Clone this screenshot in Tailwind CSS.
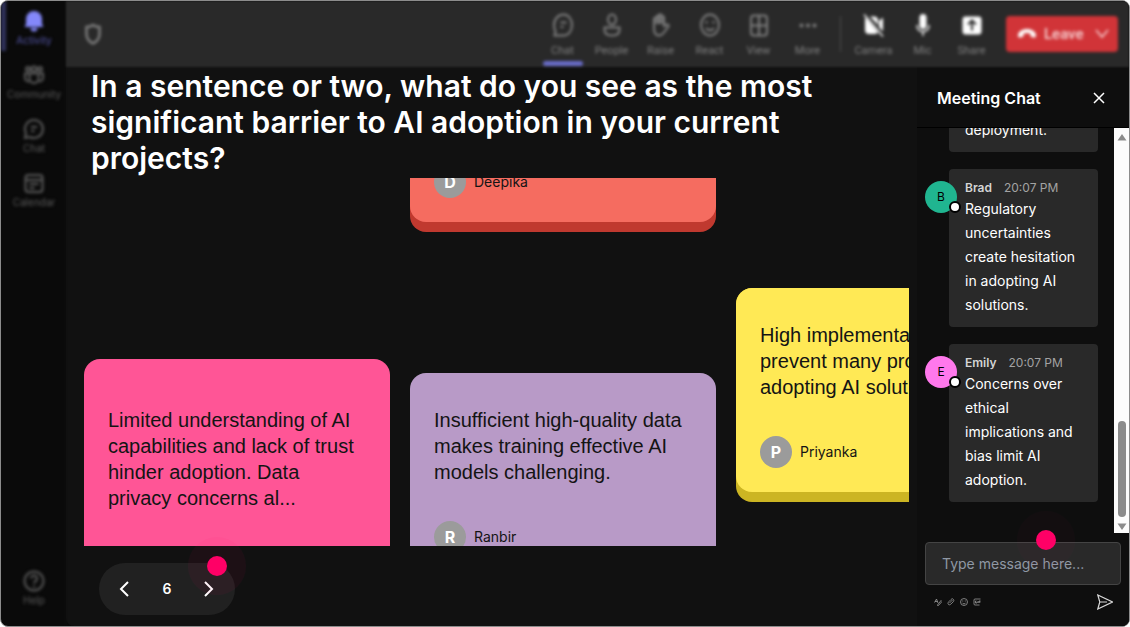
<!DOCTYPE html>
<html lang="en">
<head>
  <meta charset="UTF-8" />
  <meta name="viewport" content="width=device-width, initial-scale=1.0" />
  <title>Meeting</title>
  <script src="https://cdn.jsdelivr.net/npm/@tailwindcss/browser@4"></script>
</head>
<body class="bg-white font-['Inter',sans-serif]">
  <div class="flex h-screen overflow-hidden rounded-lg border border-[#8c8c8c] bg-[#0a0a0a] text-white">

    <!-- Sidebar -->
    <nav class="flex w-[65px] shrink-0 flex-col items-stretch border-r border-[#101010] pb-5 text-[10px] leading-3 text-[#5c5c5c] blur-[1px]">
      <a href="#" class="flex h-[50px] flex-col items-center gap-px border-l-5 border-[#30325c] pt-2 pr-[3px] text-[#5456a8] blur-[1px]">
        <svg class="size-6 shrink-0 text-[#8488fa]" viewBox="0 0 24 24" fill="currentColor"><path d="M12 2a8 8 0 0 0-8 8v5l-1.500 3h19L20 15v-5a8 8 0 0 0-8-8zM8.500 19h7a3.500 3.500 0 0 1-7 0z"/></svg>
        Activity
      </a>
      <a href="#" class="flex h-[54px] flex-col items-center gap-px pt-3 pl-0.5 blur-[1px]">
        <svg class="size-6 shrink-0" viewBox="0 0 24 24" fill="none" stroke="currentColor" stroke-width="2"><circle cx="6" cy="6" r="2"/><circle cx="12" cy="6" r="2.500"/><circle cx="18" cy="6" r="2"/><path d="M7.500 10.500h9v5a4.500 4.500 0 0 1-9 0zM7 10.500H3V15a3.500 3.500 0 0 0 4 3.400M17 10.500h4V15a3.500 3.500 0 0 1-4 3.400"/></svg>
        Community
      </a>
      <a href="#" class="flex h-[54px] flex-col items-center gap-px pt-3 pl-0.5 blur-[1px]">
        <svg class="size-6 shrink-0" viewBox="0 0 24 24" fill="none" stroke="currentColor" stroke-width="2"><path d="M12 3a9 9 0 1 1-4.200 17L3 21l1-4.800A9 9 0 0 1 12 3z"/><path d="M9 10h6M9 14h3.500"/></svg>
        Chat
      </a>
      <a href="#" class="flex h-[54px] flex-col items-center gap-px pt-3 pl-0.5 blur-[1px]">
        <svg class="size-6 shrink-0" viewBox="0 0 24 24" fill="none" stroke="currentColor" stroke-width="2"><rect x="3.500" y="4" width="17" height="17" rx="3"/><path d="M3.500 9h17M7.500 13h9M7.500 17h5"/></svg>
        Calendar
      </a>
      <a href="#" class="mt-auto flex flex-col items-center gap-px pl-0.5 blur-[1px]">
        <svg class="size-6 shrink-0" viewBox="0 0 24 24" fill="none" stroke="currentColor" stroke-width="2"><circle cx="12" cy="12" r="9.500"/><path d="M9 9.500a3 3 0 1 1 4.500 2.600c-1 .6-1.500 1.200-1.500 2.400M12 16.500v2"/></svg>
        Help
      </a>
    </nav>

    <div class="flex min-w-0 flex-1 flex-col rounded-bl-lg bg-[#111111]">

      <!-- Meeting toolbar -->
      <header class="flex h-[66px] shrink-0 items-center bg-[#292929] pr-[11px] pl-[15px] font-[Roboto,sans-serif] text-[11px] leading-3 text-[#808080] blur-[1px]">
        <div class="flex flex-1 items-center blur-[1px]">
          <svg class="size-6" viewBox="0 0 24 24" fill="none" stroke="currentColor" stroke-width="2.500"><path d="M12 3c2 1.500 4 2 6.500 2v7c0 4.500-2.500 7.500-6.500 9.500-4-2-6.500-5-6.500-9.500V5c2.500 0 4.500-.5 6.500-2z"/></svg>
        </div>
        <div class="flex h-full blur-[1px]">
          <button class="flex w-[49px] flex-col items-center gap-2 pt-3">
            <svg class="h-6 w-6 shrink-0" viewBox="0 0 24 24" fill="none" stroke="currentColor" stroke-width="2"><path d="M12.500 1.500c5 0 8.500 4.500 8.500 10.500s-3.500 10.500-8.500 10.500H3.500l1-4C3 16 3 14 3 12c0-6 4.500-10.500 9.500-10.500z"/><path d="M9.500 9.500h6M9.500 14h3"/></svg>
            Chat
            <span class="-mt-1 h-[5px] w-10 shrink-0 rounded-sm bg-[#6a6dca]"></span>
          </button>
          <button class="flex w-[49px] flex-col items-center gap-2 pt-3">
            <svg class="h-6 w-6 shrink-0" viewBox="0 0 24 24" fill="none" stroke="currentColor" stroke-width="2"><ellipse cx="12" cy="6.500" rx="4" ry="5"/><path d="M4.500 14.500h15v2c0 4-3 6-7.500 6s-7.500-2-7.500-6z"/></svg>
            People
          </button>
          <button class="flex w-[49px] flex-col items-center gap-2 pt-3">
            <svg class="h-6 w-6 shrink-0" viewBox="0 0 24 24" fill="none" stroke="currentColor" stroke-width="2"><path d="M5 15V6a1.200 1.200 0 0 1 2.500 0v5V4a1.200 1.200 0 0 1 2.500 0v7V2.500a1.200 1.200 0 0 1 2.500 0V11V4.500a1.200 1.200 0 0 1 2.500 0V13l3-1.500c1.500 0 2 1 1.500 2l-5 6.500c-1.500 2-3 2.500-4.500 2.500-3.500 0-5-3-5-7.500z"/></svg>
            Raise
          </button>
          <button class="flex w-[49px] flex-col items-center gap-2 pt-3">
            <svg class="h-6 w-6 shrink-0" viewBox="0 0 24 24" fill="none" stroke="currentColor" stroke-width="2"><ellipse cx="12" cy="12" rx="9" ry="10.500"/><path d="M8 15c2 3 6 3 8 0M8.500 8v2.500M15.500 8v2.500"/></svg>
            React
          </button>
          <button class="flex w-[49px] flex-col items-center gap-2 pt-3">
            <svg class="h-6 w-6 shrink-0" viewBox="0 0 24 24" fill="none" stroke="currentColor" stroke-width="2"><rect x="4" y="2.500" width="16" height="20" rx="3"/><path d="M12 2.500v20M4 12.500h16"/></svg>
            View
          </button>
          <button class="flex w-[49px] flex-col items-center gap-2 pt-3">
            <svg class="h-6 w-6 shrink-0" viewBox="0 0 24 24" fill="currentColor"><circle cx="5.500" cy="12.500" r="2"/><circle cx="12" cy="12.500" r="2"/><circle cx="18.500" cy="12.500" r="2"/></svg>
            More
          </button>
          <span class="mx-2 h-9 w-px self-center bg-[#505050]"></span>
          <button class="flex w-[49px] flex-col items-center gap-2 pt-3">
            <svg class="h-6 w-6 shrink-0 text-white" viewBox="0 0 24 24" fill="currentColor"><path d="M3 6v11a4 4 0 0 0 4 4h6a4 4 0 0 0 3-1.500L3.500 4.500zM8 3.500 16 12V7.500a4 4 0 0 0-4-4zM17 8l4-3.500v14L17 14z"/><path d="m2 1.500 19 22" stroke="currentColor" stroke-width="1.500"/></svg>
            Camera
          </button>
          <button class="flex w-[49px] flex-col items-center gap-2 pt-3">
            <svg class="h-6 w-6 shrink-0 text-white" viewBox="0 0 24 24" fill="currentColor"><rect x="8.500" y="1" width="7" height="15" rx="3.500"/><path d="M6 12c0 4 2 6.500 6 6.500s6-2.500 6-6.500M12 18.500V23" fill="none" stroke="currentColor" stroke-width="1.500"/></svg>
            Mic
          </button>
          <button class="flex w-[49px] flex-col items-center gap-2 pt-3">
            <svg class="h-6 w-6 shrink-0 text-white" viewBox="0 0 24 24"><rect x="2.500" y="3.500" width="19" height="18" rx="3" fill="currentColor"/><path d="M12 17.500V8M8 11.500 12 7.500l4 4" fill="none" stroke="#292929" stroke-width="2"/></svg>
            Share
          </button>
        </div>
        <button class="ml-2.5 flex h-9 w-28 items-center rounded bg-[#d13438] pl-3 text-[15px] font-medium text-[#f8d6d7] blur-[1px]">
          <svg class="mr-2 h-5 w-[18px]" viewBox="0 0 18 20" fill="#ffffff"><path d="M9 5c4.500 0 9 2.500 9 6.500 0 1.500-.7 2.300-2 2l-2.500-.6c-.8-.2-1-.8-1-1.500v-1.700c-2-.9-5-.9-7 0v1.700c0 .7-.2 1.300-1 1.500L2 13.500c-1.300.3-2-.5-2-2C0 7.500 4.500 5 9 5z"/></svg>
          Leave
          <svg class="mr-2 ml-auto h-3 w-4" viewBox="0 0 16 12" fill="none" stroke="currentColor" stroke-width="1.500"><path d="m2 2 6 7 6-7"/></svg>
        </button>
      </header>

      <div class="flex min-h-0 flex-1">

        <!-- Answers board -->
        <main class="flex min-w-0 flex-1 flex-col pt-px">
          <h1 class="max-w-[780px] px-[25px] text-[30px] leading-9 font-semibold">In a sentence or two, what do you see as the most significant barrier to AI adoption in your current projects?</h1>

          <div class="mt-0.5 mr-2 ml-[18px] flex flex-1 gap-5 overflow-hidden text-[20px] leading-[26px] text-[#141414]">
            <div class="w-[306px] shrink-0 pt-[181px]">
              <article class="h-[205px] rounded-2xl border-b-10 border-[#c83e77] bg-[#ff5596] px-6 pt-12">
                <p class="font-['Liberation_Sans',sans-serif]">Limited understanding of AI capabilities and lack of trust hinder adoption. Data privacy concerns al...</p>
              </article>
            </div>

            <div class="-mt-3 flex w-[306px] shrink-0 flex-col gap-[141px]">
              <article class="rounded-b-2xl bg-[#c0392f]">
                <div class="flex items-center gap-2 rounded-b-2xl bg-[#f56c60] px-6 pb-6 text-sm">
                  <span class="flex size-8 items-center justify-center rounded-full bg-[#9b9b9b] text-base font-bold text-white">D</span>
                  Deepika
                </div>
                <div class="h-2.5"></div>
              </article>
              <article class="rounded-2xl bg-[#b89ac7] px-6 pt-[34px] pb-6">
                <p class="font-['Liberation_Sans',sans-serif]">Insufficient high-quality data makes training effective AI models challenging.</p>
                <div class="mt-9 flex items-center gap-2 text-sm">
                  <span class="flex size-8 items-center justify-center rounded-full bg-[#9b9b9b] text-base font-bold text-white">R</span>
                  Ranbir
                </div>
              </article>
            </div>

            <div class="w-[306px] shrink-0 pt-[110px]">
              <article class="rounded-2xl bg-[#ccb523]">
                <div class="rounded-2xl bg-[#ffe955] px-6 pt-[34px] pb-6">
                  <p class="font-['Liberation_Sans',sans-serif]">High implementation costs<br>prevent many projects from<br>adopting AI solutions.</p>
                  <div class="mt-9 flex items-center gap-2 text-sm">
                    <span class="flex size-8 items-center justify-center rounded-full bg-[#9b9b9b] text-base font-bold text-white">P</span>
                    Priyanka
                  </div>
                </div>
                <div class="h-2.5"></div>
              </article>
            </div>
          </div>

          <div class="flex h-20 shrink-0 items-center pt-1.5 pl-[33px]">
            <div class="relative flex h-[52px] w-[136px] items-center justify-between rounded-full bg-[#212121] px-[18px] text-sm font-semibold">
              <button aria-label="Previous" class="flex size-4 items-center justify-center">
                <svg class="h-4 w-3" viewBox="0 0 12 16" fill="none" stroke="currentColor" stroke-width="2"><path d="M9 1 2 8l7 7"/></svg>
              </button>
              <span>6</span>
              <button aria-label="Next" class="flex size-4 items-center justify-center">
                <svg class="h-4 w-3" viewBox="0 0 12 16" fill="none" stroke="currentColor" stroke-width="2"><path d="m2 1 7 7-7 7"/></svg>
              </button>
              <span class="absolute -top-[26px] -right-[11px] flex size-[58px] items-center justify-center rounded-full bg-[#ff0066]/5">
                <span class="size-5 rounded-full bg-[#ff0066]"></span>
              </span>
            </div>
          </div>
        </main>

        <!-- Chat panel -->
        <aside class="flex w-[212px] shrink-0 flex-col bg-[#0e0e0e]">
          <div class="flex h-[61px] shrink-0 items-center justify-between border-b border-black pt-0.5 pr-6 pl-5">
            <h2 class="text-base font-semibold">Meeting Chat</h2>
            <button aria-label="Close">
              <svg class="size-3" viewBox="0 0 12 12" fill="none" stroke="currentColor" stroke-width="1.500"><path d="m1 1 10 10M11 1 1 11"/></svg>
            </button>
          </div>

          <div class="flex min-h-0 flex-1">
            <ul class="flex flex-1 flex-col justify-end gap-[17px] overflow-hidden pr-4 pb-[31px] pl-8 text-sm leading-6">
              <li class="shrink-0 rounded bg-[#292929] px-4 pb-2.5">deployment.</li>
              <li class="relative shrink-0 rounded bg-[#292929] px-4 py-2.5">
                <span class="absolute top-3 -left-6 flex size-8 items-center justify-center rounded-full bg-[#20b590] text-xs text-black">B</span>
                <span class="absolute top-8 left-0 size-3 rounded-full border-2 border-black bg-white"></span>
                <p class="flex gap-3 text-xs leading-[18px] text-[#a3a3a3]"><b class="font-semibold text-[#d4d4d4]">Brad</b> 20:07 PM</p>
                <p>Regulatory uncertainties create hesitation in adopting AI solutions.</p>
              </li>
              <li class="relative shrink-0 rounded bg-[#292929] px-4 py-2.5">
                <span class="absolute top-3 -left-6 flex size-8 items-center justify-center rounded-full bg-[#ff78ec] text-xs text-black">E</span>
                <span class="absolute top-8 left-0 size-3 rounded-full border-2 border-black bg-white"></span>
                <p class="flex gap-3 text-xs leading-[18px] text-[#a3a3a3]"><b class="font-semibold text-[#d4d4d4]">Emily</b> 20:07 PM</p>
                <p>Concerns over ethical implications and bias limit AI adoption.</p>
              </li>
            </ul>
            <!-- Scrollbar -->
            <div class="flex w-[15px] flex-col items-center bg-[#fcfcfc] pt-[5px] pb-0.5">
              <svg class="h-2 w-2.5" viewBox="0 0 10 8" fill="#8b8b8b"><path d="M5 1 9.500 7.500h-9z"/></svg>
              <span class="mt-auto mb-1.5 h-24 w-2 rounded-full bg-[#8b8b8b]"></span>
              <svg class="h-2 w-2.5" viewBox="0 0 10 8" fill="#8b8b8b"><path d="M5 7 .5.500h9z"/></svg>
            </div>
          </div>

          <div class="relative shrink-0 px-2 pt-[9px]">
            <input type="text" aria-label="Message" placeholder="Type message here..." class="block h-[43px] w-full rounded border border-[#444444] bg-[#292929] px-4 text-sm placeholder:text-[#8f98a4]" />
            <span class="absolute -top-[22px] left-[100px] flex size-[58px] items-center justify-center rounded-full bg-[#ff0066]/2">
              <span class="size-5 rounded-full bg-[#ff0066]"></span>
            </span>
          </div>
          <div class="flex h-[41px] shrink-0 items-center gap-[5px] pr-4 pb-2 pl-[17px] text-[#a0a0a0]">
            <button aria-label="Format"><svg class="size-2" viewBox="0 0 16 16" fill="none" stroke="currentColor" stroke-width="1.500"><path d="M1 9 5 2l3 8M2 7h5M7 14l7-9 2 2-7 8H7z"/></svg></button>
            <button aria-label="Attach"><svg class="size-2" viewBox="0 0 16 16" fill="none" stroke="currentColor" stroke-width="1.500"><path d="m5 10 6-6M3 13c-2-2-1-4 1-6l4-4c2-2 4-2 5 0s1 3-1 5l-4 4c-2 2-4 2-5 1z"/></svg></button>
            <button aria-label="Emoji"><svg class="size-2" viewBox="0 0 16 16" fill="none" stroke="currentColor" stroke-width="1.500"><circle cx="8" cy="8" r="7"/><path d="M4.500 9.500c1.500 3 5.500 3 7 0M5.500 5v2M10.500 5v2"/></svg></button>
            <button aria-label="GIF"><svg class="size-2" viewBox="0 0 16 16" fill="none" stroke="currentColor" stroke-width="1.500"><path d="M15 2H4a2 2 0 0 0-2 2v8a2 2 0 0 0 2 2h9M7 6H5v4h3V8M10 6v4M15 6h-3v4M12 8h3"/></svg></button>
            <button aria-label="Send" class="ml-auto text-[#d8d8d8]"><svg class="size-4" viewBox="0 0 16 16" fill="none" stroke="currentColor" stroke-width="1.200"><path d="M.8 1 15.500 8 .8 15l2-7zM2.800 8H10"/></svg></button>
          </div>
        </aside>
      </div>
    </div>
  </div>
</body>
</html>
